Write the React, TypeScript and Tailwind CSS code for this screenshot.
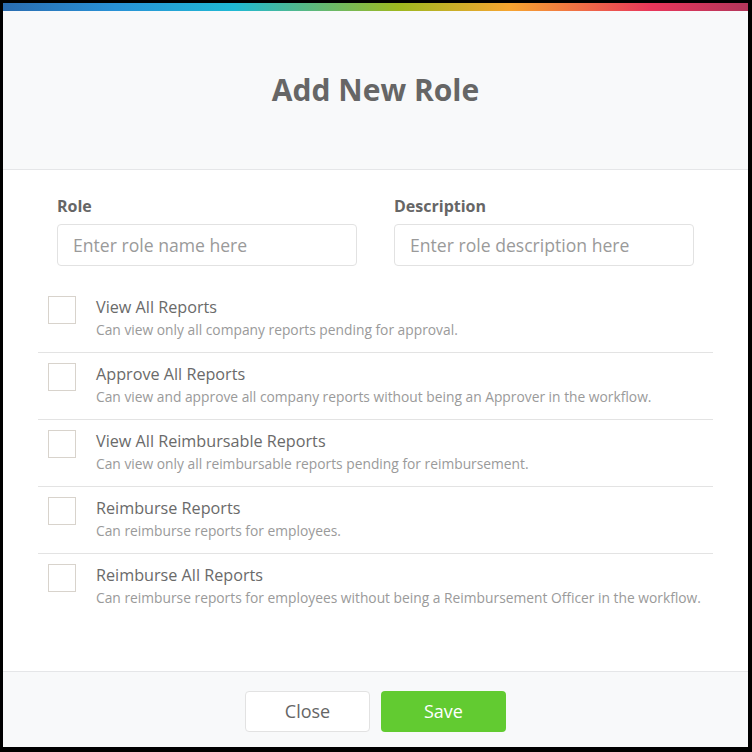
import React from "react";

const permissions = [
  {
    title: "View All Reports",
    desc: "Can view only all company reports pending for approval.",
  },
  {
    title: "Approve All Reports",
    desc: "Can view and approve all company reports without being an Approver in the workflow.",
  },
  {
    title: "View All Reimbursable Reports",
    desc: "Can view only all reimbursable reports pending for reimbursement.",
  },
  {
    title: "Reimburse Reports",
    desc: "Can reimburse reports for employees.",
  },
  {
    title: "Reimburse All Reports",
    desc: "Can reimburse reports for employees without being a Reimbursement Officer in the workflow.",
  },
];

function PermissionRow({ title, desc, last }: { title: string; desc: string; last: boolean }) {
  return (
    <div className={`flex items-start px-[10px] pt-[10px] pb-[12px] ${last ? "" : "border-b border-[#e3e3e3]"}`}>
      <div className="w-[28px] h-[28px] shrink-0 border border-[#d8d3cc] bg-white" />
      <div className="ml-[20px] flex flex-col">
        <span className="text-[16.2px] leading-[22px] text-[#6a6a6a]">{title}</span>
        <span className="mt-[2px] text-[13.8px] leading-[20px] text-[#9a9a9a]">{desc}</span>
      </div>
    </div>
  );
}

export default function App() {
  return (
    <div
      className="w-[752px] h-[752px] bg-black border-l-[3px] border-t-[3px] border-r-[4px] border-b-[5px] border-black flex flex-col"
      style={{ fontFamily: '"Open Sans", "Noto Sans", sans-serif' }}
    >
      <div className="h-[8px] shrink-0 bg-[linear-gradient(to_right,#2a6cb0_0%,#2891d6_15%,#1fb9d4_31%,#9db81f_53%,#f7a530_68%,#e8365a_87%,#b3365b_100%)]" />
      <div className="h-[159px] shrink-0 bg-[#f8f9fa] border-b border-[#e5e6e8] flex items-center justify-center">
        <h1 className="text-[30px] font-bold text-[#666666] leading-none">Add New Role</h1>
      </div>

      <div className="flex-1 bg-white flex flex-col">
        <div className="px-[54px] pt-[25px] grid grid-cols-2 gap-x-[37px]">
          <div className="flex flex-col">
            <label className="text-[16px] leading-[22px] font-bold text-[#666666] mb-[7px]">Role</label>
            <input
              className="h-[42px] rounded-[4px] border border-[#e2e2e2] px-[15px] text-[17.6px] text-[#666666] placeholder:text-[#9a9a9a] outline-none"
              placeholder="Enter role name here"
            />
          </div>
          <div className="flex flex-col">
            <label className="text-[16px] leading-[22px] font-bold text-[#666666] mb-[7px]">Description</label>
            <input
              className="h-[42px] rounded-[4px] border border-[#e2e2e2] px-[15px] text-[17.6px] text-[#666666] placeholder:text-[#9a9a9a] outline-none"
              placeholder="Enter role description here"
            />
          </div>
        </div>

        <div className="mx-[35px] mt-[20px] flex flex-col">
          {permissions.map((p, i) => (
            <PermissionRow key={p.title} title={p.title} desc={p.desc} last={i === permissions.length - 1} />
          ))}
        </div>
      </div>

      <div className="h-[76px] shrink-0 bg-[#f8f9fa] border-t border-[#e5e6e8] flex justify-center pt-[19px] gap-[11px]">
        <button className="w-[125px] h-[41px] rounded-[4px] bg-white border border-[#e2e2e2] text-[18px] text-[#666666]">
          Close
        </button>
        <button className="w-[125px] h-[41px] rounded-[4px] bg-[#62cb31] text-[18px] text-white">
          Save
        </button>
      </div>
    </div>
  );
}
